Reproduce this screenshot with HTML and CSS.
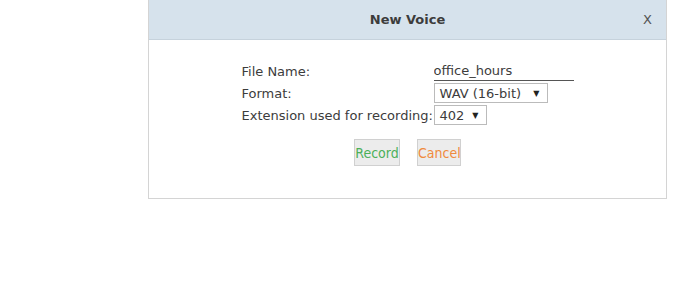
FILE: index.html
```html
<!DOCTYPE html>
<html lang="en">
<head>
    <meta charset="UTF-8">
    <title>New Voice</title>
    <link rel="stylesheet" href="styles.css">
</head>
<body>
    <div class="dialog">
        <div class="dialog-header">
            <h1>New Voice</h1>
            <span class="close">X</span>
        </div>

        <form class="dialog-body">
            <div class="fields">
                <label for="fileName">File Name:</label>
                <input type="text" id="fileName" class="text-input" value="office_hours">

                <label for="format">Format:</label>
                <div><span class="select select-wide">WAV (16-bit)<i>&#9660;</i></span></div>

                <label for="ext">Extension used for recording:</label>
                <div><span class="select">402<i>&#9660;</i></span></div>
            </div>

            <div class="actions">
                <button type="button" class="button record">Record</button>
                <button type="button" class="button cancel">Cancel</button>
            </div>
        </form>
    </div>
</body>
</html>
```

FILE: styles.css
```css
body {
    margin: 0;
    padding: 0;
    background-color: #ffffff;
    font-family: "DejaVu Sans", Verdana, sans-serif;
    font-size: 13px;
    color: #3c3c3c;
}

.dialog {
    width: 517px;
    height: 198px;
    margin-left: 148px;
    border: 1px solid #d4d4d4;
    border-top: none;
    background-color: #fff;
}

.dialog-header {
    position: relative;
    height: 39px;
    background-color: #d6e2ec;
    border-bottom: 1px solid #c6d2dc;
    display: flex;
    align-items: center;
    justify-content: center;
}

.dialog-header h1 {
    margin: 0;
    font-size: 13px;
    font-weight: bold;
    color: #3c3c3c;
}

.close {
    position: absolute;
    right: 14px;
    top: 12px;
    font-size: 13px;
    color: #555;
}

.dialog-body {
    padding-top: 20px;
}

.fields {
    display: grid;
    grid-template-columns: 192px 140px;
    grid-auto-rows: 22px;
    justify-content: center;
    align-items: center;
}

.fields label {
    white-space: nowrap;
}

.text-input {
    width: 140px;
    box-sizing: border-box;
    border: none;
    border-bottom: 1px solid #555;
    padding: 0;
    height: 19px;
    font-family: inherit;
    font-size: 13px;
    color: #3c3c3c;
    outline: none;
}

.select {
    display: inline-flex;
    align-items: center;
    justify-content: space-between;
    box-sizing: border-box;
    height: 20px;
    padding: 0 7px 0 5px;
    border: 1px solid #bbb;
    width: 53px;
    font-size: 13px;
    color: #3c3c3c;
}

.select-wide {
    width: 114px;
}

.select i {
    font-style: normal;
    font-size: 8px;
    color: #222;
}

.actions {
    display: flex;
    justify-content: center;
    gap: 17px;
    margin-top: 13px;
}

.button {
    height: 27px;
    padding: 0;
    border: 1px solid #d0d0d0;
    background-color: #ececec;
    font-family: "DejaVu Sans Condensed", "DejaVu Sans", sans-serif;
    font-size: 14px;
    cursor: pointer;
}

.record {
    width: 46px;
    color: #4cb05a;
}

.cancel {
    width: 44px;
    color: #f08a3c;
}
```
